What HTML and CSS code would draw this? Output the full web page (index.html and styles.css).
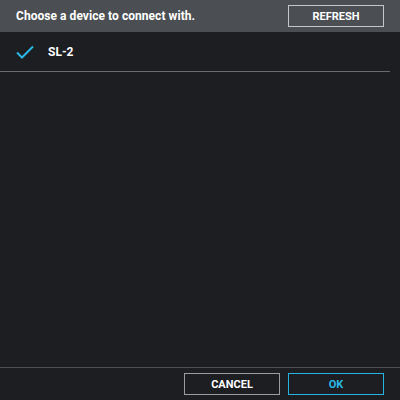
FILE: index.html
```html
<!DOCTYPE html>
<html>
<head>
<meta charset="utf-8">
<link rel="stylesheet" href="styles.css">
</head>
<body>
<div class="dialog">
  <header class="head">
    <span class="title">Choose a device to connect with.</span>
    <button class="btn btn-light">REFRESH</button>
  </header>
  <main class="list">
    <div class="item">
      <svg class="check" width="18" height="14" viewBox="0 0 18 14"><path d="M1 7.5 L6 12.5 L17 1.5" fill="none" stroke="#2bb8e6" stroke-width="2"/></svg>
      <span class="name">SL-2</span>
    </div>
  </main>
  <footer class="foot">
    <button class="btn btn-grey">CANCEL</button>
    <button class="btn btn-ok">OK</button>
  </footer>
</div>
</body>
</html>
```
FILE: styles.css
```css
* { box-sizing: border-box; }
html, body { margin: 0; padding: 0; }
body {
  width: 400px;
  height: 400px;
  background: #1d1e21;
  font-family: Roboto, "Liberation Sans", sans-serif;
  color: #ffffff;
  overflow: hidden;
}
.dialog {
  display: flex;
  flex-direction: column;
  height: 400px;
}
.head {
  height: 32px;
  background: #4b4f53;
  display: flex;
  align-items: center;
  justify-content: space-between;
  padding: 0 16px;
}
.title {
  font-size: 12px;
  font-weight: 700;
  letter-spacing: 0.05px;
}
.btn {
  width: 96px;
  height: 22px;
  background: transparent;
  font-family: Roboto, "Liberation Sans", sans-serif;
  font-size: 11px;
  font-weight: 700;
  color: #ffffff;
  padding: 0;
  border: 1px solid #b8bcbe;
  cursor: pointer;
}
.btn-light { border-color: #c4c8ca; }
.btn-grey { border-color: #9c9d9f; }
.btn-ok { border-color: #27b4e4; color: #2bb8e6; }
.list {
  flex: 1;
  padding-right: 10px;
}
.item {
  height: 40px;
  display: flex;
  align-items: center;
  border-bottom: 1px solid #6a6b6e;
  padding-left: 16px;
}
.check {
  display: block;
  margin-top: 1px;
}
.name {
  margin-left: 14px;
  font-size: 12px;
  font-weight: 700;
}
.foot {
  border-top: 1px solid #4e4f52;
  height: 33px;
  display: flex;
  justify-content: flex-end;
  align-items: flex-start;
  gap: 8px;
  padding: 5px 16px 0 0;
}
```
